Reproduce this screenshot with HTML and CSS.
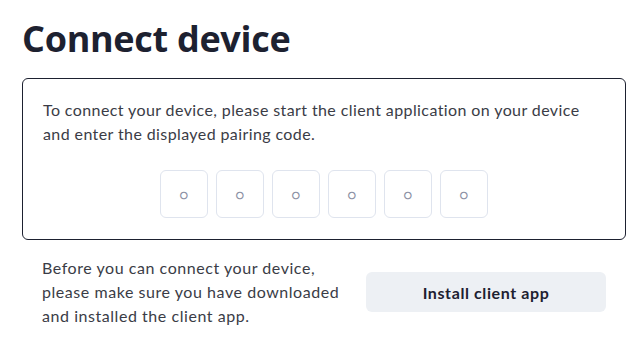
FILE: index.html
```html
<!DOCTYPE html>
<html lang="en">
<head>
  <meta charset="UTF-8">
  <meta name="viewport" content="width=device-width, initial-scale=1.0">
  <title>Connect device</title>
  <link rel="stylesheet" href="styles.css">
</head>
<body>
  <div class="page">
    <h1>Connect device</h1>
    <div class="card">
      <p>To connect your device, please start the client application on your device and enter the displayed pairing code.</p>
      <div class="code">
        <span class="digit">○</span>
        <span class="digit">○</span>
        <span class="digit">○</span>
        <span class="digit">○</span>
        <span class="digit">○</span>
        <span class="digit">○</span>
      </div>
    </div>
    <div class="install">
      <p>Before you can connect your device, please make sure you have downloaded and installed the client app.</p>
      <button>Install client app</button>
    </div>
  </div>
</body>
</html>
```

FILE: styles.css
```css
body {
  margin: 0;
  font-family: Lato, "Open Sans", sans-serif;
  color: #3a3c46;
  background: #fff;
}
.page {
  padding: 18px 17px 0 22px;
}
h1 {
  margin: 0 0 18px;
  font-family: "Open Sans", sans-serif;
  font-size: 36px;
  line-height: 42px;
  font-weight: 700;
  color: #1d2130;
  letter-spacing: -0.3px;
}
.card {
  border: 1px solid #1d2130;
  border-radius: 6px;
  padding: 19px 20px 21px;
}
.card p {
  margin: 0;
  font-size: 16px;
  line-height: 24px;
  letter-spacing: 0.4px;
}
.code {
  display: flex;
  justify-content: center;
  gap: 8px;
  margin-top: 24px;
}
.digit {
  width: 46px;
  height: 46px;
  border: 1px solid #dfe4ee;
  border-radius: 6px;
  display: flex;
  align-items: center;
  justify-content: center;
  font-size: 14px;
  color: #8c91a4;
}
.install {
  display: flex;
  align-items: center;
  margin-top: 16px;
  padding-left: 20px;
}
.install p {
  margin: 0;
  width: 304px;
  font-size: 16px;
  line-height: 24px;
  letter-spacing: 0.55px;
}
button {
  margin-left: 20px;
  width: 240px;
  height: 40px;
  border: none;
  border-radius: 6px;
  background-color: #edf0f4;
  color: #1d2130;
  font-family: Lato, sans-serif;
  font-size: 16px;
  font-weight: 700;
  letter-spacing: 0.6px;
}
```
